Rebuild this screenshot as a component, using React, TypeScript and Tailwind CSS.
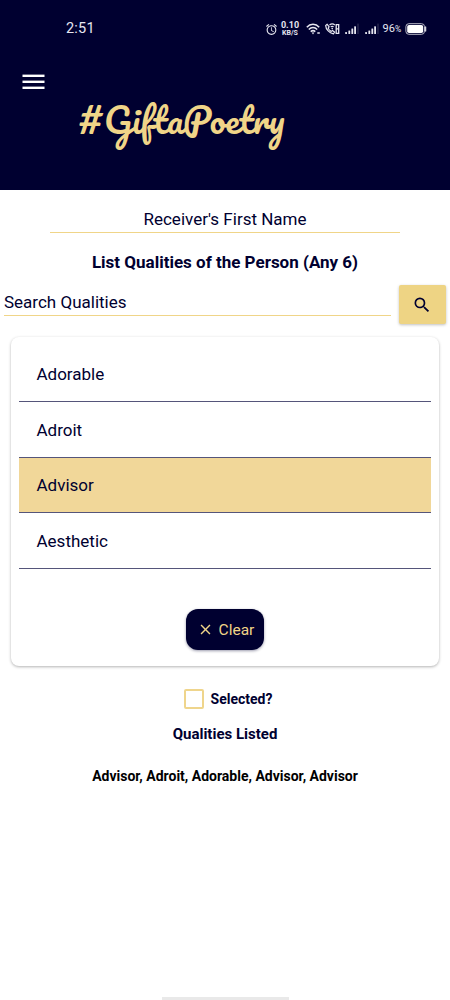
import clsx from "clsx";
import { MdAlarm, MdClose, MdSearch } from "react-icons/md";

const qualities = ["Adorable", "Adroit", "Advisor", "Aesthetic"];
const listed = ["Advisor", "Adroit", "Adorable", "Advisor", "Advisor"];

function WifiIcon() {
  return (
    <svg width="15" height="12" viewBox="0 0 15 12" fill="none" stroke="currentColor" strokeWidth="1.5">
      <path d="M0.8 4.2C4.2 0.4 9.8 0.4 13.2 4.2" />
      <path d="M2.8 6.4C5.2 3.9 8.8 3.9 11.2 6.4" />
      <path d="M4.7 8.6C6.2 7.3 7.8 7.3 9.3 8.6" />
      <path d="M5.7 9.6L7 11.4L8.3 9.6Z" fill="currentColor" stroke="none" />
      <path d="M11.3 10H13.8" />
    </svg>
  );
}

function WifiCallIcon() {
  return (
    <svg width="15" height="12" viewBox="0 0 15 12" fill="none" stroke="currentColor">
      <path d="M2.2 1.3L0.7 2.6C0.9 6.6 4.4 10 8.4 10.8L9.6 9.2L7.5 7.6L6.2 8.4C4.7 7.6 3.7 6.5 3.2 5.1L4.1 3.8Z" strokeWidth="1.2" />
      <path d="M4.5 2C6.2 0.7 8.3 0.7 9.8 2M5.7 3.9C6.6 3.2 7.7 3.2 8.6 3.9" strokeWidth="1.2" />
      <circle cx="7.2" cy="5.6" r="0.8" fill="currentColor" stroke="none" />
      <path d="M11.2 1V11M13.7 1V11M10.6 1.6H14.3M10.6 5.8H14.3M10.6 10.4H14.3" strokeWidth="1.3" />
    </svg>
  );
}

function SignalIcon() {
  return (
    <svg width="14" height="12" viewBox="0 0 14 12" fill="currentColor">
      <rect x="0.2" y="9" width="1.8" height="2" rx="0.5" />
      <rect x="3.4" y="7.6" width="1.8" height="3.4" rx="0.5" />
      <rect x="6.4" y="5.6" width="1.8" height="5.4" rx="0.5" />
      <rect x="9.2" y="3.2" width="1.8" height="7.8" rx="0.5" />
      <rect x="12.4" y="0.6" width="1.2" height="10.4" rx="0.5" opacity="0.2" />
    </svg>
  );
}

function BatteryIcon() {
  return (
    <svg width="22" height="12" viewBox="0 0 22 12" fill="none">
      <rect x="0.9" y="0.7" width="18.6" height="10.6" rx="3" stroke="#b9b9c8" strokeWidth="1" />
      <rect x="2.2" y="2" width="16" height="8" rx="1.8" fill="white" />
      <path d="M20.6 4V8" stroke="#d5d5df" strokeWidth="1.3" strokeLinecap="round" />
    </svg>
  );
}

function StatusBar() {
  return (
    <div className="flex h-[58px] items-center justify-between pl-[66px] pr-[23.5px] text-[#e6e6f0]">
      <span className="text-[14.5px] tracking-[0.2px]">2:51</span>
      <div className="flex items-center">
        <MdAlarm className="size-[13px]" />
        <div className="ml-[3px] w-[19px] text-center text-[9px] font-bold leading-[8px]">
          <p>0.10</p>
          <p className="text-[7px]">KB/S</p>
        </div>
        <div className="ml-[6px] flex items-center">
          <WifiIcon />
          <div className="ml-[4px]">
            <WifiCallIcon />
          </div>
          <div className="ml-[5px] flex gap-1.5">
            <SignalIcon />
            <SignalIcon />
          </div>
        </div>
        <span className="ml-[4px] w-[20px] whitespace-nowrap text-[11px]">
          96<span className="text-[8.5px]">%</span>
        </span>
        <div className="ml-[2px]">
          <BatteryIcon />
        </div>
      </div>
    </div>
  );
}

function MenuIcon() {
  return (
    <svg width="23" height="16" viewBox="0 0 23 16" fill="white">
      <rect x="0.5" y="0.6" width="22" height="2.4" />
      <rect x="0.5" y="6.6" width="22" height="2.4" />
      <rect x="0.5" y="12.6" width="22" height="2.4" />
    </svg>
  );
}

function Header() {
  return (
    <header className="h-[190px] bg-[#000030]">
      <StatusBar />
      <button className="ml-[22px] mt-4 block">
        <MenuIcon />
      </button>
      <h1 className="ml-[79px] mt-[5px] flex whitespace-nowrap font-['Pacifico',cursive] text-[35px] leading-[48px] text-[#f0d588]">
        <span className="w-[25px] font-['Lato',sans-serif] text-[41px] font-bold italic leading-[48px]">#</span>
        <span>GiftaPoetry</span>
      </h1>
    </header>
  );
}

export default function App() {
  return (
    <div className="flex h-[1000px] w-[450px] flex-col overflow-hidden bg-white font-['Roboto',sans-serif] text-[#000030]">
      <Header />
      <main className="flex-1">
        <div className="mx-[50px] flex h-[43px] items-end justify-center border-b border-[#f0d588] pb-[3px] text-[17px] leading-5">
          Receiver's First Name
        </div>
        <h2 className="mt-[19px] text-center text-[17px] font-bold leading-5">
          List Qualities of the Person (Any 6)
        </h2>
        <div className="mt-[13px] flex pl-1 pr-1">
          <div className="flex h-[31px] w-[387px] items-end border-b border-[#f0d588] pb-[3px] text-[17px] leading-5">
            Search Qualities
          </div>
          <button className="ml-2 flex h-[39px] w-[47px] items-center justify-center rounded-[2px] bg-[#eed484] pr-px shadow-[0_1px_3px_rgba(0,0,0,0.25)]">
            <MdSearch className="size-5" />
          </button>
        </div>
        <section className="mx-[11px] mt-[13px] h-[329px] rounded-lg bg-white px-2 pt-[9px] shadow-[0_1px_3px_rgba(0,0,0,0.3)]">
          <ul>
            {qualities.map((quality) => (
              <li
                key={quality}
                className={clsx(
                  "flex h-[55.8px] items-center border-b border-[#55557a] pl-[17.5px] pt-[2.4px] text-[17px]",
                  quality === "Advisor" && "bg-[#f1d799]"
                )}
              >
                {quality}
              </li>
            ))}
          </ul>
          <button className="mx-auto mt-[39.8px] flex h-[41px] w-[78px] items-center justify-center gap-[5px] rounded-xl bg-[#000030] pl-px text-[15.5px] text-[#f0d588] shadow-[0_1px_3px_rgba(0,0,48,0.4)]">
            <MdClose className="size-[17px]" />
            <span className="pt-[2px]">Clear</span>
          </button>
        </section>
        <label className="mt-[23px] flex h-5 items-center justify-center gap-[7px] pl-[6px] text-[14px] font-bold">
          <span className="size-5 rounded-[2px] border-2 border-[#efd58c]" />
          <span className="pt-px">Selected?</span>
        </label>
        <h3 className="mt-[15px] text-center text-[15px] font-bold leading-5">Qualities Listed</h3>
        <p className="mt-[22px] text-center text-[14px] font-bold leading-5 text-black">{listed.join(", ")}</p>
      </main>
      <div className="mx-auto h-[3px] w-[127px] bg-[#e9e9e9]" />
    </div>
  );
}
